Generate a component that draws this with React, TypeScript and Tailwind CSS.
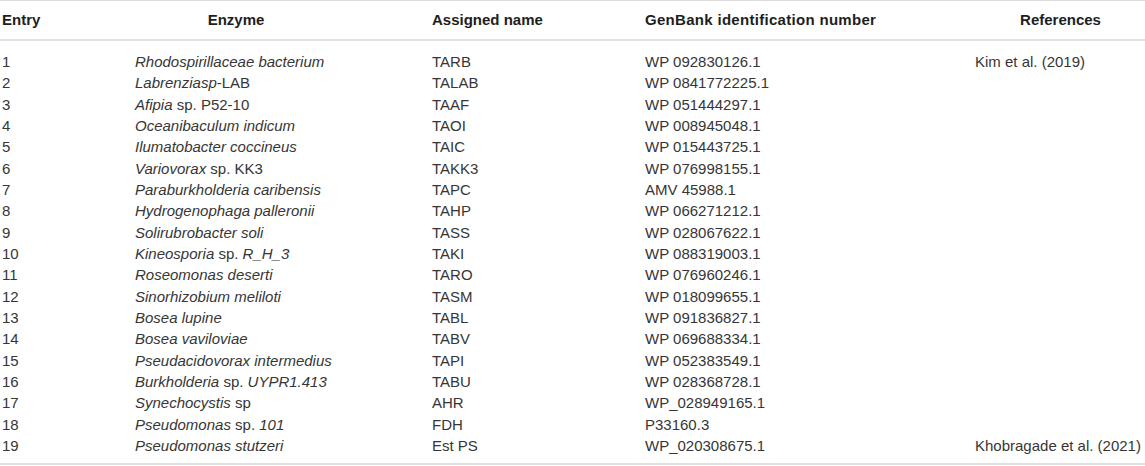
import React from "react";

type Row = [string, React.ReactNode, string, string, string];

const rows: Row[] = [
  ["1", <i>Rhodospirillaceae bacterium</i>, "TARB", "WP 092830126.1", "Kim et al. (2019)"],
  ["2", <><i>Labrenziasp</i>-LAB</>, "TALAB", "WP 0841772225.1", ""],
  ["3", <><i>Afipia</i> sp. P52-10</>, "TAAF", "WP 051444297.1", ""],
  ["4", <i>Oceanibaculum indicum</i>, "TAOI", "WP 008945048.1", ""],
  ["5", <i>Ilumatobacter coccineus</i>, "TAIC", "WP 015443725.1", ""],
  ["6", <><i>Variovorax</i> sp. KK3</>, "TAKK3", "WP 076998155.1", ""],
  ["7", <i>Paraburkholderia caribensis</i>, "TAPC", "AMV 45988.1", ""],
  ["8", <i>Hydrogenophaga palleronii</i>, "TAHP", "WP 066271212.1", ""],
  ["9", <i>Solirubrobacter soli</i>, "TASS", "WP 028067622.1", ""],
  ["10", <><i>Kineosporia</i> sp. <i>R_H_3</i></>, "TAKI", "WP 088319003.1", ""],
  ["11", <i>Roseomonas deserti</i>, "TARO", "WP 076960246.1", ""],
  ["12", <i>Sinorhizobium meliloti</i>, "TASM", "WP 018099655.1", ""],
  ["13", <i>Bosea lupine</i>, "TABL", "WP 091836827.1", ""],
  ["14", <i>Bosea vaviloviae</i>, "TABV", "WP 069688334.1", ""],
  ["15", <i>Pseudacidovorax intermedius</i>, "TAPI", "WP 052383549.1", ""],
  ["16", <><i>Burkholderia</i> sp. <i>UYPR1.413</i></>, "TABU", "WP 028368728.1", ""],
  ["17", <><i>Synechocystis</i> sp</>, "AHR", "WP_028949165.1", ""],
  ["18", <><i>Pseudomonas</i> sp. <i>101</i></>, "FDH", "P33160.3", ""],
  ["19", <i>Pseudomonas stutzeri</i>, "Est PS", "WP_020308675.1", "Khobragade et al. (2021)"],
];

const cols = "grid grid-cols-[135px_297px_213px_330px_170px]";

export default function App() {
  return (
    <div
      className="w-[1145px] h-[466px] bg-white text-[15px] text-[#363636]"
      style={{ fontFamily: '"Liberation Sans", Arial, sans-serif' }}
    >
      <div className="h-px bg-[#dcdcdc]" />
      <div className={`${cols} h-[38px] items-center font-bold text-[#1e1e1e]`}>
        <div className="pl-[2px]">Entry</div>
        <div className="w-[202px] text-center">Enzyme</div>
        <div>Assigned name</div>
        <div className="tracking-[0.3px]">GenBank identification number</div>
        <div className="text-center pl-[1px]">References</div>
      </div>
      <div className="h-[2px] bg-[#e2e2e2]" />
      <div className="pt-[10px] pb-[7px]">
        {rows.map((r, i) => (
          <div key={i} className={`${cols} h-[21.33px] items-center leading-[21px]`}>
            <div className="pl-[2px]">{r[0]}</div>
            <div className="whitespace-nowrap">{r[1]}</div>
            <div>{r[2]}</div>
            <div>{r[3]}</div>
            <div className="whitespace-nowrap">{r[4]}</div>
          </div>
        ))}
      </div>
      <div className="h-[2px] bg-[#e0e0e0]" />
    </div>
  );
}
